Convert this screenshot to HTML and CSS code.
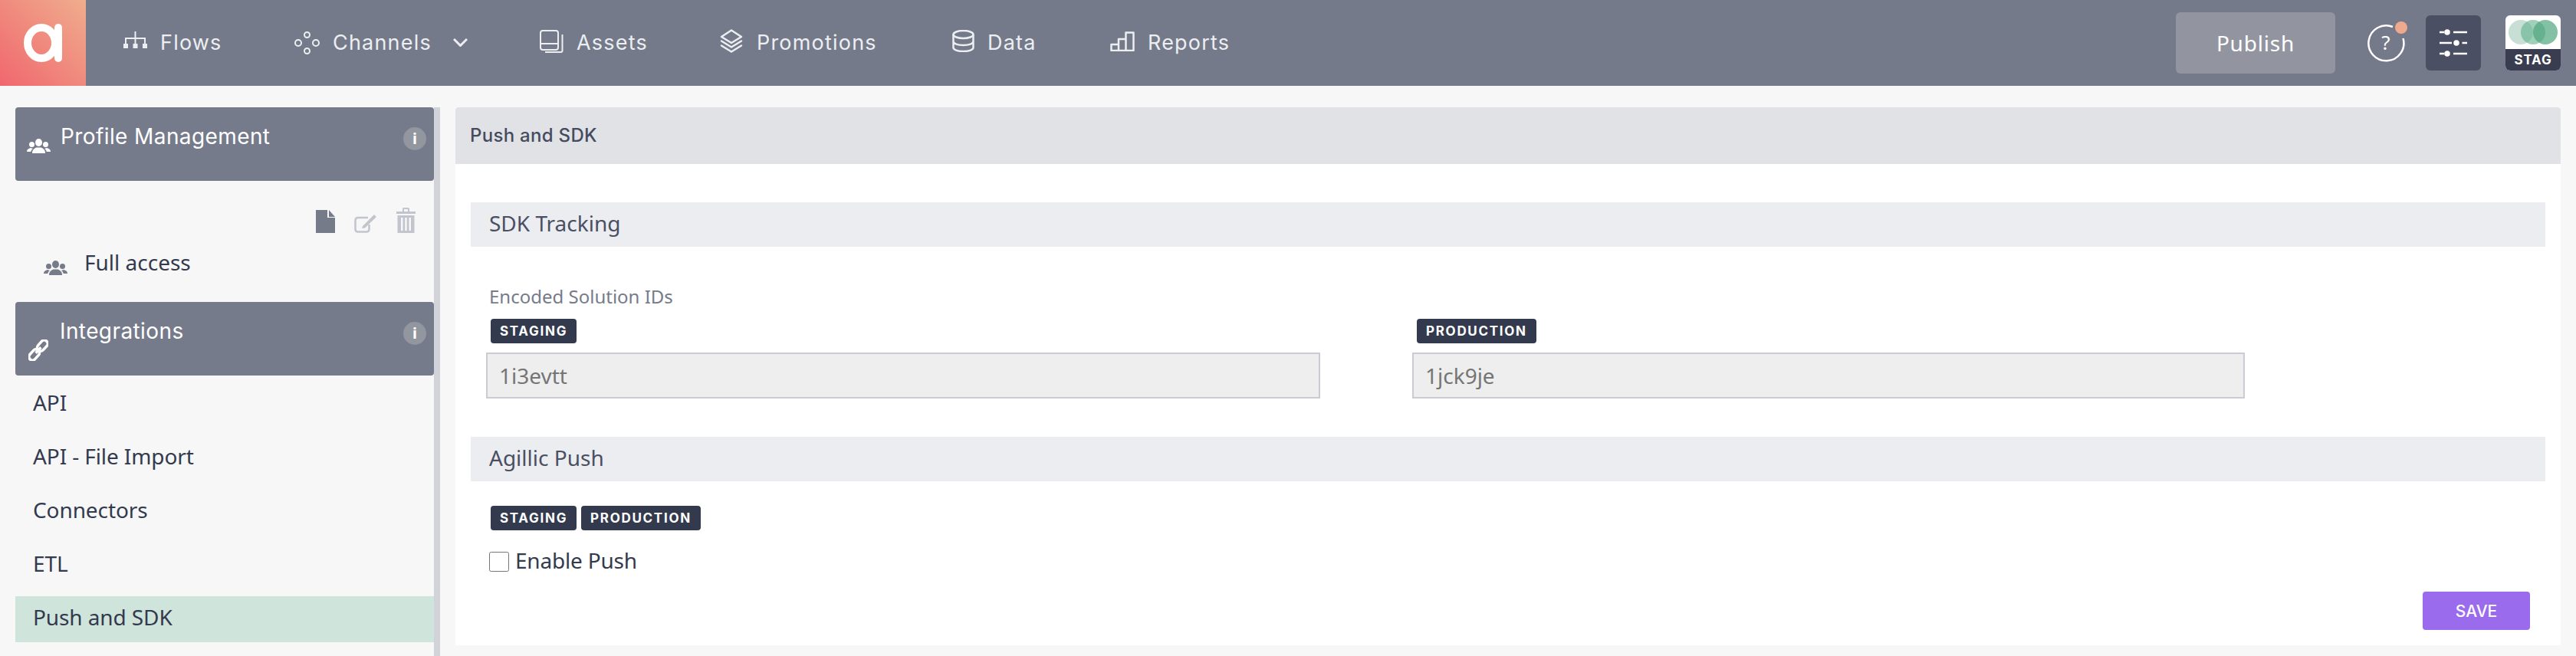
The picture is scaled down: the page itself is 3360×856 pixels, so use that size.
FILE: index.html
```html
<!DOCTYPE html>
<html lang="en">
<head>
    <meta charset="UTF-8">
    <title>Push and SDK</title>
    <link rel="stylesheet" href="styles.css">
</head>
<body>
    <header class="topbar">
        <a class="logo">
            <svg width="50" height="50" viewBox="0 0 50 50" fill="none" stroke="#fff" stroke-width="10">
                <ellipse cx="23" cy="25" rx="18" ry="20"/>
                <path d="M45 5V45" stroke-linecap="round"/>
            </svg>
        </a>
        <nav class="nav">
            <a class="nav-item">
                <svg class="flows-icon" width="31" height="22" viewBox="0 0 31 22" fill="none" stroke="currentColor" stroke-width="2">
                    <path d="M15.500 0V16M3 16V9H28V16"/>
                    <path d="M0 16H6V22H0ZM12.500 16H18.500V22H12.500ZM25 16H31V22H25Z" fill="currentColor" stroke="none"/>
                </svg>
                <span>Flows</span>
            </a>
            <a class="nav-item">
                <svg class="channels-icon" width="33" height="30" viewBox="0 0 33 30" fill="none" stroke="currentColor" stroke-width="2">
                    <circle cx="16.500" cy="4.500" r="3.500"/>
                    <circle cx="5" cy="15" r="4"/>
                    <circle cx="28" cy="15" r="4"/>
                    <circle cx="16.500" cy="25.500" r="3.500"/>
                </svg>
                <span>Channels</span>
                <svg class="chevron" width="19" height="11" viewBox="0 0 19 11" fill="none" stroke="currentColor" stroke-width="3">
                    <path d="M1 1L9.500 9.500L18 1"/>
                </svg>
            </a>
            <a class="nav-item">
                <svg width="31" height="30" viewBox="0 0 31 30" fill="none" stroke="currentColor" stroke-width="2">
                    <rect x="1" y="1" width="23" height="25" rx="3"/>
                    <path d="M1 18H24M29.500 6V27Q29.500 29 27.500 29H7"/>
                </svg>
                <span>Assets</span>
            </a>
            <a class="nav-item">
                <svg width="32" height="31" viewBox="0 0 32 31" fill="none" stroke="currentColor" stroke-width="2.500" stroke-linejoin="round" stroke-linecap="round">
                    <path d="M16 1.500L29 10L16 18L3 10Z"/>
                    <path d="M3 15.500L16 23.500L29 15.500M3 21.500L16 29.500L29 21.500"/>
                </svg>
                <span>Promotions</span>
            </a>
            <a class="nav-item">
                <svg width="29" height="29" viewBox="0 0 29 29" fill="none" stroke="currentColor" stroke-width="2.500">
                    <ellipse cx="14.500" cy="6" rx="13" ry="5"/>
                    <path d="M1.500 6V23C1.500 26 7 28 14.500 28S27.500 26 27.500 23V6M1.500 15C1.500 18 7 20 14.500 20S27.500 18 27.500 15"/>
                </svg>
                <span>Data</span>
            </a>
            <a class="nav-item">
                <svg width="32" height="26" viewBox="0 0 32 26" fill="none" stroke="currentColor" stroke-width="2.500">
                    <path d="M1.500 25V17H11V25ZM11 25V10H20.500V25ZM20.500 25V1.500H30.500V25Z" stroke-linejoin="round"/>
                </svg>
                <span>Reports</span>
            </a>
        </nav>
        <div class="actions">
            <button class="publish">Publish</button>
            <svg class="help" width="52" height="56" viewBox="0 0 52 56" fill="none">
                <path d="M33 7A23 23 0 1 0 46.500 22" stroke="#fff" stroke-width="2.500"/>
                <circle cx="44" cy="8" r="8" fill="#efa98e"/>
                <text class="help-mark" x="24" y="37" text-anchor="middle">?</text>
            </svg>
            <div class="settings">
                <svg width="36" height="36" viewBox="0 0 36 36" fill="#fff" stroke="#fff" stroke-width="2.500">
                    <path d="M0 4H6M18 4H36M0 18H16M29.500 18H36M0 32H6M18 32H36" fill="none"/>
                    <circle cx="10" cy="4" r="2.500"/>
                    <circle cx="22" cy="18" r="2.500"/>
                    <circle cx="10" cy="32" r="2.500"/>
                </svg>
            </div>
            <div class="env">
                <svg class="env-logo" width="72" height="44" viewBox="0 0 72 44">
                    <circle cx="20" cy="22" r="16" fill="#c7dfd4"/>
                    <circle cx="36" cy="22" r="16" fill="#5fb08c" opacity="0.6"/>
                    <circle cx="52" cy="22" r="16" fill="#4fa57d" opacity="0.7"/>
                </svg>
                <div class="env-name">STAG</div>
            </div>
        </div>
    </header>

    <div class="page">
        <aside class="sidebar">
            <div class="side-head">
                <svg class="side-icon users-icon" width="31" height="19" viewBox="0 0 31 19" fill="currentColor">
                    <ellipse cx="15.500" cy="5" rx="4.500" ry="5"/>
                    <path d="M7 19C7 15 9 13 12.500 11.500H18.500C22 13 24 15 24 19Z"/>
                    <circle cx="6.500" cy="7.500" r="3.500"/>
                    <circle cx="24.500" cy="7.500" r="3.500"/>
                    <path d="M0 17C0 14 2 13 5 12L8 13C6.500 14 5.500 15.500 5.200 17ZM31 17C31 14 29 13 26 12L23 13C24.500 14 25.500 15.500 25.800 17Z"/>
                </svg>
                <span class="side-title">Profile Management</span>
                <i class="info">i</i>
            </div>
            <div class="tools">
                <svg width="25" height="30" viewBox="0 0 25 30" fill="#767b8a">
                    <path d="M0 0H15V10H25V30H0Z"/>
                    <path d="M17 0L25 9H17Z"/>
                </svg>
                <svg width="30" height="26" viewBox="0 0 30 26" fill="none" stroke="#c2c5ce" stroke-width="2.500">
                    <path d="M18 6H5Q1.500 6 1.500 9.500V21Q1.500 24.500 5 24.500H16Q19.500 24.500 19.500 21V15"/>
                    <path d="M11 17L26 2L29 5L14 19.500L10 20Z" fill="#c2c5ce" stroke="none"/>
                </svg>
                <svg width="25" height="33" viewBox="0 0 25 33" fill="#c2c5ce">
                    <path d="M0 5H8V1.500Q8 0 9.500 0H15.500Q17 0 17 1.500V5H25V8H0ZM10 2V5H15V2Z" fill-rule="evenodd"/>
                    <path d="M1.500 10H23.500V33H1.500ZM6 13V30H8.500V13ZM11.200 13V30H13.700V13ZM16.500 13V30H19V13Z" fill-rule="evenodd"/>
                </svg>
            </div>
            <div class="profile">
                <svg class="users-icon" width="31" height="19" viewBox="0 0 31 19" fill="#767b8a">
                    <ellipse cx="15.500" cy="5" rx="4.500" ry="5"/>
                    <path d="M7 19C7 15 9 13 12.500 11.500H18.500C22 13 24 15 24 19Z"/>
                    <circle cx="6.500" cy="7.500" r="3.500"/>
                    <circle cx="24.500" cy="7.500" r="3.500"/>
                    <path d="M0 17C0 14 2 13 5 12L8 13C6.500 14 5.500 15.500 5.200 17ZM31 17C31 14 29 13 26 12L23 13C24.500 14 25.500 15.500 25.800 17Z"/>
                </svg>
                <span>Full access</span>
            </div>
            <div class="side-head">
                <svg class="side-icon link-icon" width="26" height="28" viewBox="0 0 26 28" fill="none" stroke="currentColor" stroke-width="3.500">
                    <g transform="rotate(-48 13 14)">
                        <rect x="-3" y="9.500" width="16" height="9" rx="4.500"/>
                        <rect x="13" y="9.500" width="16" height="9" rx="4.500"/>
                        <path d="M8 14H18"/>
                    </g>
                </svg>
                <span class="side-title">Integrations</span>
                <i class="info">i</i>
            </div>
            <ul class="menu">
                <li>API</li>
                <li>API - File Import</li>
                <li>Connectors</li>
                <li>ETL</li>
                <li class="active">Push and SDK</li>
            </ul>
        </aside>

        <main class="panel">
            <h1 class="panel-title">Push and SDK</h1>
            <div class="panel-body">
                <h2 class="section-bar">SDK Tracking</h2>
                <p class="field-label">Encoded Solution IDs</p>
                <div class="fields">
                    <div>
                        <span class="badge">STAGING</span>
                        <input class="field-input" type="text" value="1i3evtt" disabled>
                    </div>
                    <div>
                        <span class="badge">PRODUCTION</span>
                        <input class="field-input" type="text" value="1jck9je" disabled>
                    </div>
                </div>

                <h2 class="section-bar second">Agillic Push</h2>
                <div class="badges">
                    <span class="badge">STAGING</span>
                    <span class="badge">PRODUCTION</span>
                </div>
                <label class="check">
                    <input type="checkbox">
                    <span>Enable Push</span>
                </label>
                <div class="form-foot">
                    <button class="save">SAVE</button>
                </div>
            </div>
        </main>
    </div>
</body>
</html>
```

FILE: styles.css
```css
* {
    margin: 0;
    padding: 0;
    box-sizing: border-box;
    list-style: none;
}
html, body {
    height: 856px;
    overflow: hidden;
}
body {
    background: #f7f7f7;
    font-family: "Noto Sans", sans-serif;
    font-size: 28px;
    color: #333a4e;
}

/* top bar */
.topbar {
    display: flex;
    align-items: center;
    height: 112px;
    background: #747a8a;
}
.logo {
    display: flex;
    align-items: center;
    justify-content: center;
    width: 112px;
    height: 112px;
    background: linear-gradient(45deg, #f0676e, #f0ad8d);
}
.nav {
    display: grid;
    grid-template-columns: 223px 320px 234px 304px 206px auto;
    margin-bottom: 5px;
    padding-left: 49px;
}
.nav-item {
    display: flex;
    align-items: center;
    gap: 17px;
    height: 40px;
    color: #eceef1;
    font-family: Inter, sans-serif;
    font-size: 27px;
    letter-spacing: 1.2px;
}
.nav-item span {
    margin-top: 4px;
}
.flows-icon {
    margin-bottom: 3px;
}
.channels-icon {
    margin-top: 5px;
}
.chevron {
    margin: 4px 0 0 11px;
}
.actions {
    display: flex;
    align-items: center;
    margin-left: auto;
    padding-right: 20px;
}
.publish {
    width: 208px;
    height: 80px;
    border: 0;
    border-radius: 6px;
    background: #92959f;
    color: #fff;
    font-family: "Noto Sans", sans-serif;
    font-size: 28px;
    letter-spacing: 0.8px;
}
.help {
    margin-left: 42px;
}
.help-mark {
    fill: #fff;
    font-family: "Noto Sans", sans-serif;
    font-size: 26px;
}
.settings {
    display: flex;
    align-items: center;
    justify-content: center;
    width: 72px;
    height: 72px;
    margin-left: 24px;
    border-radius: 6px;
    background: #4a4f63;
}
.env {
    width: 72px;
    height: 72px;
    margin-left: 32px;
    overflow: hidden;
    border-radius: 6px;
    background: #fff;
}
.env-logo {
    display: block;
}
.env-name {
    height: 28px;
    background: #3a3d50;
    color: #fff;
    font-family: Inter, sans-serif;
    font-size: 17px;
    font-weight: 700;
    line-height: 28px;
    letter-spacing: 0.8px;
    text-align: center;
}

/* page */
.page {
    display: flex;
    gap: 20px;
    margin-top: 28px;
}
.sidebar {
    width: 574px;
    height: 716px;
    padding-left: 20px;
    border-right: 8px solid #d2d3d9;
}
.side-head {
    display: flex;
    height: 96px;
    padding: 14px 10px 0 15px;
    border-radius: 4px;
    background: #767b8b;
    color: #fff;
}
.side-icon {
    flex: none;
}
.users-icon.side-icon {
    margin-top: 27px;
}
.link-icon {
    margin: 35px 2px 0 2px;
}
.side-title {
    flex: 1;
    margin-left: 13px;
    height: 48px;
    font-family: Inter, sans-serif;
    font-size: 28px;
    line-height: 48px;
    letter-spacing: 0.4px;
}
.info {
    width: 30px;
    height: 30px;
    margin-top: 12px;
    border-radius: 50%;
    background: #92969f;
    color: #fff;
    font-family: "Noto Sans", sans-serif;
    font-size: 20px;
    font-style: normal;
    font-weight: 700;
    line-height: 30px;
    text-align: center;
}
.tools {
    display: flex;
    align-items: flex-end;
    justify-content: flex-end;
    gap: 25px;
    height: 68px;
    padding-right: 24px;
}
.profile {
    display: flex;
    align-items: center;
    gap: 22px;
    height: 90px;
    padding: 0 0 14px 37px;
}
.profile .users-icon {
    margin-top: 14px;
}
.menu {
    display: flex;
    flex-direction: column;
    gap: 10px;
    padding-top: 8px;
}
.menu li {
    height: 60px;
    padding-left: 23px;
    line-height: 54px;
    letter-spacing: -0.1px;
}
.menu .active {
    background: #cfe4da;
}

/* panel */
.panel {
    width: 2746px;
    height: 702px;
    background: #fff;
}
.panel-title {
    height: 74px;
    padding-left: 19px;
    border-radius: 4px 4px 0 0;
    background: #e1e2e6;
    color: #454b5f;
    font-family: Inter, sans-serif;
    font-size: 24px;
    font-weight: 500;
    line-height: 74px;
    letter-spacing: 0.3px;
}
.panel-body {
    padding: 50px 20px 0;
}
.section-bar {
    height: 58px;
    padding-left: 24px;
    background: #ecedf0;
    color: #4a4f63;
    font-size: 28px;
    font-weight: 400;
    line-height: 54px;
}
.section-bar.second {
    margin-top: 50px;
}
.field-label {
    height: 30px;
    margin: 50px 0 14px 24px;
    color: #767b8a;
    font-size: 24px;
    line-height: 30px;
}
.fields {
    display: grid;
    grid-template-columns: 1088px 1086px;
    gap: 120px;
    padding-left: 20px;
}
.badge {
    display: block;
    width: max-content;
    height: 32px;
    padding: 0 12px;
    border-radius: 4px;
    background: #333a4e;
    color: #fff;
    font-family: Inter, sans-serif;
    font-size: 17px;
    font-weight: 700;
    line-height: 32px;
    letter-spacing: 1.7px;
}
.fields .badge {
    margin: 0 0 12px 6px;
}
.field-input {
    display: block;
    width: 100%;
    height: 60px;
    padding: 0 15px;
    border: 2px solid #c9ccd3;
    background: #eee;
    color: #757575;
    font-family: "Noto Sans", sans-serif;
    font-size: 28px;
}
.badges {
    display: flex;
    gap: 6px;
    margin: 32px 0 0 26px;
}
.check {
    display: flex;
    align-items: center;
    gap: 8px;
    width: max-content;
    height: 26px;
    margin: 28px 0 0 24px;
}
.check input {
    width: 26px;
    height: 26px;
}
.check span {
    margin-top: -4px;
    letter-spacing: -0.2px;
}
.form-foot {
    display: flex;
    justify-content: flex-end;
    margin: 26px 20px 0 0;
}
.save {
    width: 140px;
    height: 50px;
    border: 0;
    border-radius: 4px;
    background: #9b6bed;
    color: #fff;
    font-family: Inter, sans-serif;
    font-size: 21px;
    font-weight: 500;
}
```
